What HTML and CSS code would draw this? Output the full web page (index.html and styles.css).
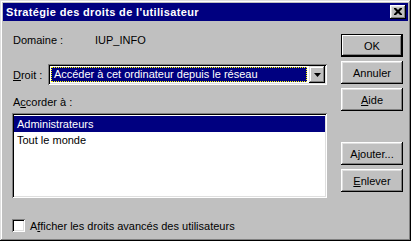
FILE: index.html
```html
<!DOCTYPE html>
<html lang="fr">
<head>
    <meta charset="UTF-8">
    <title>Stratégie des droits de l'utilisateur</title>
    <link rel="stylesheet" href="styles.css">
</head>
<body>
    <div class="window">
        <div class="titlebar">
            <span class="title">Stratégie des droits de l'utilisateur</span>
            <button class="close">
                <svg width="8" height="7" viewBox="0 0 8 7"><path d="M0 0h2l2 2 2-2h2v1l-2.5 2.5 2.5 2.5v1h-2l-2-2-2 2h-2v-1l2.5-2.5-2.5-2.5z" fill="#000"/></svg>
            </button>
        </div>

        <div class="content">
            <div class="main">
                <div class="domain-row">
                    <span class="domain-label">Domaine :</span>
                    <span>IUP_INFO</span>
                </div>

                <div class="right-row">
                    <span class="right-label"><u>D</u>roit :</span>
                    <div class="combo">
                        <div class="combo-field">
                            <span class="combo-text">Accéder à cet ordinateur depuis le réseau</span>
                        </div>
                        <div class="combo-arrow">
                            <svg width="7" height="4" viewBox="0 0 7 4"><path d="M0 0h7l-3.5 4z" fill="#000"/></svg>
                        </div>
                    </div>
                </div>

                <div class="grant-label">A<u>c</u>corder à :</div>
                <div class="listbox">
                    <div class="list-item selected">Administrateurs</div>
                    <div class="list-item">Tout le monde</div>
                </div>

                <div class="check-row">
                    <span class="check-box"></span>
                    <span>A<u>f</u>ficher les droits avancés des utilisateurs</span>
                </div>
            </div>

            <div class="buttons">
                <button class="btn default">OK</button>
                <button class="btn">Annuler</button>
                <button class="btn"><u>A</u>ide</button>
                <button class="btn btn-add">A<u>j</u>outer...</button>
                <button class="btn"><u>E</u>nlever</button>
            </div>
        </div>
    </div>
</body>
</html>
```

FILE: styles.css
```css
body {
    margin: 0;
    padding: 0;
    background: #c0c0c0;
    font-family: "Liberation Sans", Arial, sans-serif;
    font-size: 11px;
    color: #000;
}

u {
    text-decoration: underline;
    text-underline-offset: 1px;
}

.window {
    width: 411px;
    height: 241px;
    box-sizing: border-box;
    padding: 3px;
    background: #c0c0c0;
    box-shadow: inset -1px -1px 0 #000, inset 1px 1px 0 #dfdfdf,
                inset -2px -2px 0 #808080, inset 2px 2px 0 #fff;
    display: flex;
    flex-direction: column;
}

.titlebar {
    height: 18px;
    background: #000080;
    display: flex;
    align-items: center;
    justify-content: space-between;
    padding: 0 2px 0 3px;
}

.title {
    color: #fff;
    font-weight: bold;
    font-size: 11px;
    letter-spacing: 0.35px;
}

.close {
    width: 16px;
    height: 14px;
    padding: 0;
    border: none;
    background: #c0c0c0;
    box-shadow: inset -1px -1px 0 #000, inset 1px 1px 0 #fff,
                inset -2px -2px 0 #808080, inset 2px 2px 0 #dfdfdf;
    display: flex;
    align-items: center;
    justify-content: center;
}

.close svg {
    display: block;
    margin: 0 1px 1px 0;
}

.content {
    flex-grow: 1;
    display: flex;
}

.main {
    width: 315px;
    padding: 13px 0 0 9px;
    display: flex;
    flex-direction: column;
}

.domain-row {
    height: 13px;
    line-height: 13px;
    padding-left: 1px;
    display: flex;
}

.domain-label {
    width: 82px;
}

.right-row {
    margin-top: 17px;
    display: flex;
    align-items: center;
}

.right-label {
    width: 35px;
    padding-left: 1px;
}

.combo {
    width: 280px;
    height: 21px;
    box-sizing: border-box;
    padding: 2px;
    background: #fff;
    box-shadow: inset 1px 1px 0 #808080, inset -1px -1px 0 #fff,
                inset 2px 2px 0 #000, inset -2px -2px 0 #dfdfdf;
    display: flex;
}

.combo-field {
    flex-grow: 1;
    padding: 1px 2px 1px 1px;
    display: flex;
}

.combo-text {
    flex-grow: 1;
    background: #000080;
    color: #fff;
    border: 1px dotted #ffff00;
    line-height: 13px;
    padding-left: 2px;
}

.combo-arrow {
    width: 16px;
    height: 17px;
    background: #c0c0c0;
    box-shadow: inset -1px -1px 0 #000, inset 1px 1px 0 #dfdfdf,
                inset -2px -2px 0 #808080, inset 2px 2px 0 #fff;
    display: flex;
    align-items: center;
    justify-content: center;
}

.grant-label {
    margin-top: 11px;
    line-height: 13px;
    padding-left: 1px;
}

.listbox {
    margin-top: 4px;
    height: 85px;
    box-sizing: border-box;
    padding: 3px 2px 2px 2px;
    background: #fff;
    box-shadow: inset 1px 1px 0 #808080, inset -1px -1px 0 #fff,
                inset 2px 2px 0 #000, inset -2px -2px 0 #dfdfdf;
}

.list-item {
    height: 16px;
    line-height: 16px;
    padding-left: 3px;
}

.list-item.selected {
    background: #000080;
    color: #fff;
}

.check-row {
    margin-top: 21px;
    display: flex;
    align-items: center;
    gap: 5px;
}

.check-box {
    width: 13px;
    height: 13px;
    box-sizing: border-box;
    background: #fff;
    box-shadow: inset 1px 1px 0 #808080, inset -1px -1px 0 #fff,
                inset 2px 2px 0 #000, inset -2px -2px 0 #dfdfdf;
}

.buttons {
    margin-left: 14px;
    width: 62px;
    padding-top: 13px;
    display: flex;
    flex-direction: column;
    gap: 4px;
}

.btn {
    height: 23px;
    padding: 0;
    border: none;
    background: #c0c0c0;
    font-family: "Liberation Sans", Arial, sans-serif;
    font-size: 11px;
    color: #000;
    box-shadow: inset -1px -1px 0 #000, inset 1px 1px 0 #fff,
                inset -2px -2px 0 #808080, inset 2px 2px 0 #dfdfdf;
}

.btn.default {
    box-shadow: inset 0 0 0 1px #000, inset -2px -2px 0 #000,
                inset 2px 2px 0 #fff, inset -3px -3px 0 #808080;
}

.btn-add {
    margin-top: 27px;
}
```
